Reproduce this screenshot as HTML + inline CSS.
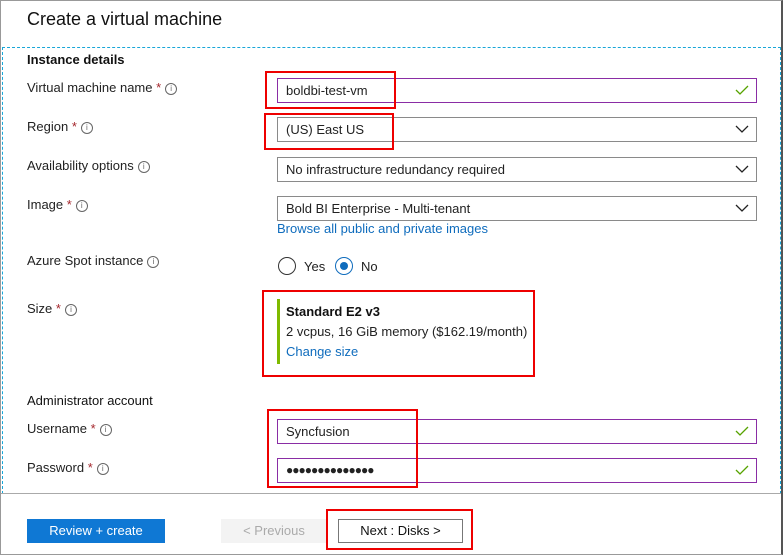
<!DOCTYPE html><html><head><style>
*{margin:0;padding:0;box-sizing:border-box}
body{width:783px;height:555px;position:relative;background:#fff;font-family:"Liberation Sans",sans-serif;font-size:13px;color:#222;overflow:hidden}
.a{position:absolute}
.lbl{position:absolute;left:27px;font-size:13px;color:#222}
.st{color:#a4262c}
.i{display:inline-block;width:12px;height:12px;border:1px solid #666;border-radius:50%;font-size:8px;text-align:center;line-height:10px;color:#666;vertical-align:1px;margin-left:4px}
.in{position:absolute;left:277px;width:480px;height:25px;border:1px solid #8a8a8a;padding-left:8px;line-height:23px;font-size:13px}
.pu{border-color:#8a2da5}
.red{position:absolute;border:2px solid #e00}
.chk{position:absolute;right:7px;top:5px}
</style></head><body>
<div class="a" style="left:0;top:0;width:783px;height:555px;border:1px solid #999;border-right:2px solid #555"></div>
<div class="a" style="left:27px;top:9px;font-size:18px;color:#111">Create a virtual machine</div>
<div class="a" style="left:2px;top:47px;width:779px;height:447px;border:1px dashed #19a6d8;border-bottom:none"></div>
<div class="a" style="left:1px;top:493px;width:780px;height:1px;background:#aaa"></div>
<div class="lbl" style="top:52px;font-weight:bold;font-size:13px;color:#111">Instance details</div>
<div class="lbl" style="top:80px">Virtual machine name <span class="st">*</span><span class="i">i</span></div>
<div class="in pu" style="top:78px">boldbi-test-vm<svg class="chk" width="14" height="12"><path d="M1 6l4 4 8-8" stroke="#57a300" fill="none" stroke-width="1.3"/></svg></div>
<div class="lbl" style="top:119px">Region <span class="st">*</span><span class="i">i</span></div>
<div class="in" style="top:117px">(US) East US<svg class="chk" width="14" height="12"><path d="M1 3l6 6 6-6" stroke="#222" fill="none" stroke-width="1.3"/></svg></div>
<div class="lbl" style="top:158px">Availability options<span class="i">i</span></div>
<div class="in" style="top:157px">No infrastructure redundancy required<svg class="chk" width="14" height="12"><path d="M1 3l6 6 6-6" stroke="#222" fill="none" stroke-width="1.3"/></svg></div>
<div class="lbl" style="top:197px">Image <span class="st">*</span><span class="i">i</span></div>
<div class="in" style="top:196px">Bold BI Enterprise - Multi-tenant<svg class="chk" width="14" height="12"><path d="M1 3l6 6 6-6" stroke="#222" fill="none" stroke-width="1.3"/></svg></div>
<div class="a" style="left:277px;top:221px;color:#0f6cbd">Browse all public and private images</div>
<div class="lbl" style="top:253px">Azure Spot instance<span class="i">i</span></div>
<div class="a" style="left:278px;top:257px;width:18px;height:18px;border:1px solid #333;border-radius:50%"></div>
<div class="a" style="left:304px;top:259px">Yes</div>
<div class="a" style="left:335px;top:257px;width:18px;height:18px;border:1px solid #0f6cbd;border-radius:50%"><div class="a" style="left:4px;top:4px;width:8px;height:8px;background:#0f6cbd;border-radius:50%"></div></div>
<div class="a" style="left:361px;top:259px">No</div>
<div class="lbl" style="top:301px">Size <span class="st">*</span><span class="i">i</span></div>
<div class="a" style="left:277px;top:299px;width:3px;height:65px;background:#7fba00"></div>
<div class="a" style="left:286px;top:304px;font-weight:bold;color:#111">Standard E2 v3</div>
<div class="a" style="left:286px;top:324px">2 vcpus, 16 GiB memory ($162.19/month)</div>
<div class="a" style="left:286px;top:344px;color:#0f6cbd">Change size</div>
<div class="lbl" style="top:393px;color:#111">Administrator account</div>
<div class="lbl" style="top:421px">Username <span class="st">*</span><span class="i">i</span></div>
<div class="in pu" style="top:419px">Syncfusion<svg class="chk" width="14" height="12"><path d="M1 6l4 4 8-8" stroke="#57a300" fill="none" stroke-width="1.3"/></svg></div>
<div class="lbl" style="top:460px">Password <span class="st">*</span><span class="i">i</span></div>
<div class="in pu" style="top:458px;font-size:12px;letter-spacing:-1px">●●●●●●●●●●●●●●<svg class="chk" width="14" height="12"><path d="M1 6l4 4 8-8" stroke="#57a300" fill="none" stroke-width="1.3"/></svg></div>
<div class="a" style="left:27px;top:519px;width:138px;height:24px;background:#0f78d4;color:#fff;text-align:center;line-height:24px">Review + create</div>
<div class="a" style="left:221px;top:519px;width:106px;height:24px;background:#f3f3f3;color:#aaa;text-align:center;line-height:24px">&lt; Previous</div>
<div class="a" style="left:338px;top:519px;width:125px;height:24px;border:1px solid #777;color:#111;text-align:center;line-height:22px">Next : Disks &gt;</div>
<div class="red" style="left:265px;top:71px;width:131px;height:38px"></div>
<div class="red" style="left:264px;top:113px;width:130px;height:37px"></div>
<div class="red" style="left:262px;top:290px;width:273px;height:87px"></div>
<div class="red" style="left:267px;top:409px;width:151px;height:79px"></div>
<div class="red" style="left:326px;top:509px;width:147px;height:41px"></div>
</body></html>
